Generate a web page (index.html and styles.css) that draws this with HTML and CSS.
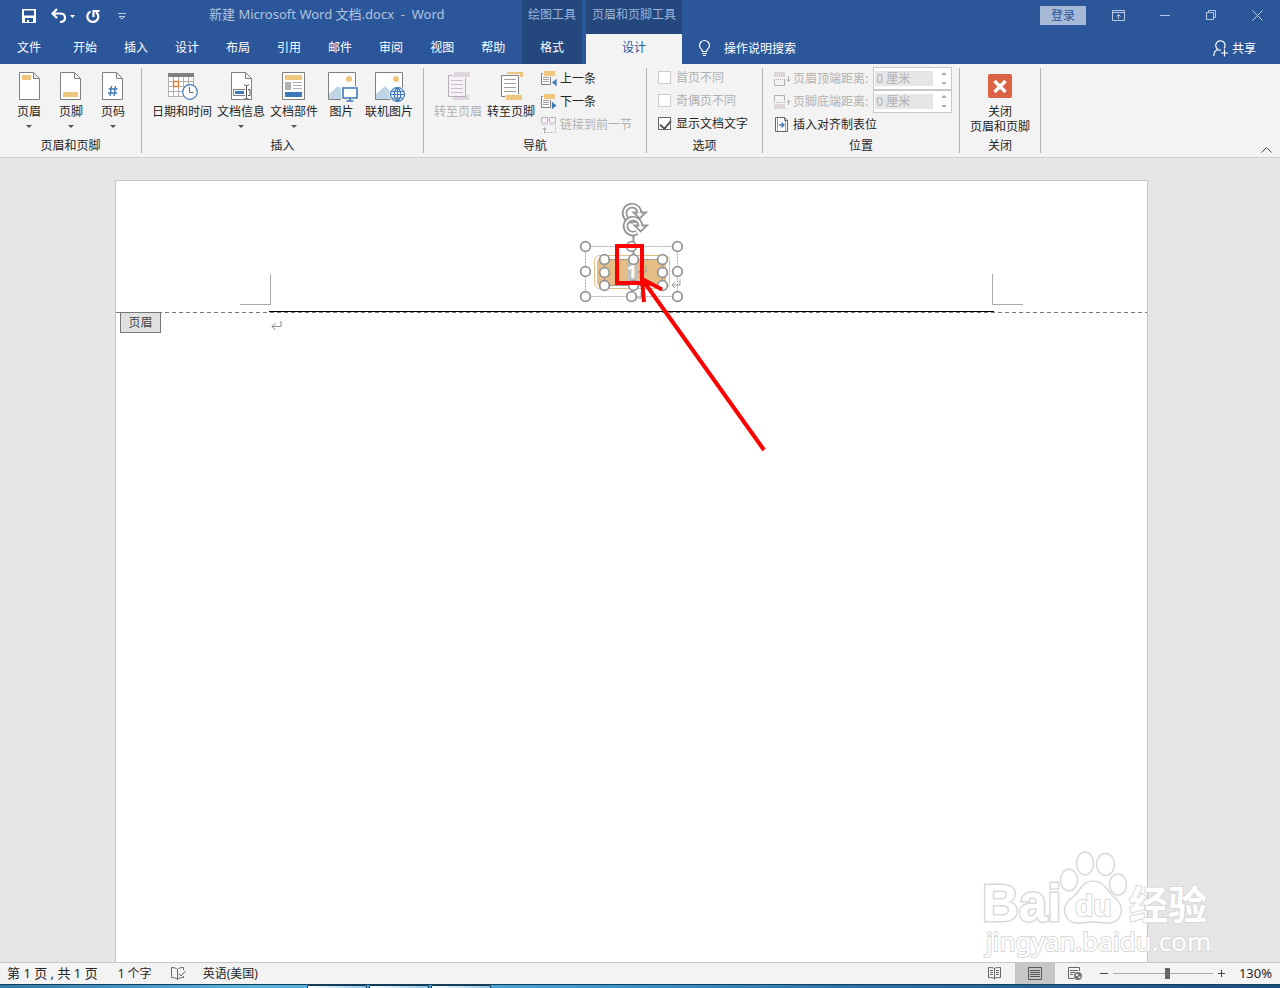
FILE: index.html
```html
<!DOCTYPE html>
<html lang="zh-CN">
<head>
    <meta charset="UTF-8">
    <meta name="viewport" content="width=device-width, initial-scale=1.0">
    <title>新建 Microsoft Word 文档.docx - Word</title>
    <link rel="stylesheet" href="styles.css">
</head>
<body>
    <header class="topbar">
        <div class="top-left">
            <div class="title-row">
                <div class="quick-access">
                    <button class="icon-btn" aria-label="保存">
                        <svg width="14" height="14" viewBox="0 0 14 14"><path fill="#fff" fill-rule="evenodd" d="M0 0h14v14H0zM2 1.500v5h10v-5zM3 9v4h2v-2h2v2h4V9z"/></svg>
                    </button>
                    <button class="icon-btn undo" aria-label="撤消">
                        <svg width="24" height="16" viewBox="0 0 24 16"><path fill="none" stroke="#fff" stroke-width="2.200" d="M6 1 1.500 5.500 6 10M2 5.500h7c3.500 0 5 1.800 5 4.200 0 2.800-2 4.300-5 4.300"/><path fill="#fff" d="M19 7h5l-2.500 3z"/></svg>
                    </button>
                    <button class="icon-btn" aria-label="重复">
                        <svg width="14" height="15" viewBox="0 0 14 15"><path fill="none" stroke="#fff" stroke-width="2.200" d="M4.500 2.500A5.500 5.500 0 1 0 10 3M7.500 8V2h6"/></svg>
                    </button>
                    <button class="icon-btn customize" aria-label="自定义快速访问工具栏">
                        <svg width="8" height="7" viewBox="0 0 8 7"><path fill="none" stroke="#b9c9e2" d="M0 .5h8M1 3.500h6L4 6z"/></svg>
                    </button>
                </div>
                <span class="doc-title">新建 Microsoft Word 文档.docx&nbsp; -&nbsp; Word</span>
            </div>
            <nav class="tabs">
                <button class="tab file">文件</button>
                <button class="tab">开始</button>
                <button class="tab">插入</button>
                <button class="tab">设计</button>
                <button class="tab">布局</button>
                <button class="tab">引用</button>
                <button class="tab">邮件</button>
                <button class="tab">审阅</button>
                <button class="tab">视图</button>
                <button class="tab">帮助</button>
            </nav>
        </div>
        <div class="context drawing">
            <span class="context-title">绘图工具</span>
            <button class="tab">格式</button>
        </div>
        <div class="context hf">
            <span class="context-title">页眉和页脚工具</span>
            <button class="tab active">设计</button>
        </div>
        <div class="top-right">
            <div class="window-row">
                <button class="login">登录</button>
                <button class="win-btn" aria-label="功能区显示选项">
                    <svg width="14" height="12" viewBox="0 0 14 12"><path fill="none" stroke="#b9c9e2" d="M.5.5h12v10H.5zM.5 2.500h12M6.500 9V4.500M4.500 6.500l2-2 2 2"/></svg>
                </button>
                <button class="win-btn" aria-label="最小化">
                    <svg width="11" height="11" viewBox="0 0 11 11"><path stroke="#b9c9e2" d="M0 5.500h10"/></svg>
                </button>
                <button class="win-btn" aria-label="还原">
                    <svg width="11" height="11" viewBox="0 0 11 11"><path fill="none" stroke="#b9c9e2" d="M.5 2.500h7v7h-7zM2.500 2.500v-2h7v7h-2"/></svg>
                </button>
                <button class="win-btn" aria-label="关闭">
                    <svg width="11" height="11" viewBox="0 0 11 11"><path fill="none" stroke="#b9c9e2" d="M.5.5l10 10M10.500.5l-10 10"/></svg>
                </button>
            </div>
            <div class="tell-row">
                <button class="tell">
                    <svg width="13" height="17" viewBox="0 0 13 17"><path fill="none" stroke="#fff" stroke-width="1.200" d="M4.500 11.500C4.500 9 1.500 8.500 1.500 5.500a5 5 0 0 1 10 0c0 3-3 3.500-3 6zM4 13.500h5M5 15.500h3"/></svg>
                    操作说明搜索
                </button>
                <button class="share">
                    <svg width="15" height="17" viewBox="0 0 15 17"><path fill="none" stroke="#fff" stroke-width="1.200" d="M.8 16c0-4 2-6 4.400-6.500M11 8.500A4.700 4.700 0 1 0 5 9.500c1 .5 2 .7 3 .5M11.500 9.500v7M8 13h7"/></svg>
                    共享
                </button>
            </div>
        </div>
    </header>

    <section class="ribbon">
        <div class="group g-hf">
            <div class="group-body">
                <button class="big">
                    <svg width="28" height="28" viewBox="0 0 28 28"><path fill="#fff" stroke="#808080" d="M4.500.5h14l6 6v21h-20zM18.500.5v6h6"/><path fill="#eec67e" d="M7 3h9v5H7z"/></svg>
                    <span>页眉</span><i class="arrow"></i>
                </button>
                <button class="big">
                    <svg width="28" height="28" viewBox="0 0 28 28"><path fill="#fff" stroke="#808080" d="M3.500.5h14l6 6v21h-20zM17.500.5v6h6"/><path fill="#eec67e" d="M6 20h15v5H6z"/></svg>
                    <span>页脚</span><i class="arrow"></i>
                </button>
                <button class="big">
                    <svg width="28" height="28" viewBox="0 0 28 28"><path fill="#fff" stroke="#808080" d="M3.500.5h14l6 6v21h-20zM17.500.5v6h6"/><path fill="none" stroke="#3f7ab8" stroke-width="1.400" d="M12.500 14l-1.500 10M16.500 14 15 24M9.500 17h9M9 21h9"/></svg>
                    <span>页码</span><i class="arrow"></i>
                </button>
            </div>
            <div class="group-name">页眉和页脚</div>
        </div>

        <div class="group g-insert">
            <div class="group-body">
                <button class="big">
                    <svg width="28" height="28" viewBox="0 0 28 28"><path fill="#fff" stroke="#b0b0b0" d="M.5 3.500h25v21H.5zM5.500 4v20M10.500 4v20M15.500 4v20M20.500 4v20M1 9.500h24M1 14.500h24M1 19.500h24"/><path fill="#808080" d="M0 1h26v4H0z"/><path fill="#fff" stroke="#e0813b" stroke-width="1.400" d="M5.500 9.500h5v5h-5z"/><circle cx="22" cy="20" r="7.300" fill="#fff" stroke="#3f7ab8" stroke-width="1.200"/><path fill="none" stroke="#666" d="M21.500 15v5.500h4"/></svg>
                    <span>日期和时间</span>
                </button>
                <button class="big">
                    <svg width="28" height="28" viewBox="0 0 28 28"><path fill="#fff" stroke="#808080" d="M4.500.5h14l6 6v21h-20zM18.500.5v6h6"/><path fill="#fff" stroke="#808080" d="M6.500 17.500h14v6h-14z"/><path fill="#3f7ab8" d="M8 19h9v3H8z"/><path fill="none" stroke="#fff" stroke-width="3" d="M19.500 13v14"/><path fill="none" stroke="#555" d="M17 12.500l2.500 1.500 2.500-1.500M19.500 14v12M17 27.500l2.500-1.500 2.500 1.500M21 17.500h2v6h-2"/></svg>
                    <span>文档信息</span><i class="arrow"></i>
                </button>
                <button class="big">
                    <svg width="28" height="28" viewBox="0 0 28 28"><path fill="#fff" stroke="#808080" d="M2.500.5h22v27h-22z"/><path fill="#eec67e" d="M5 3h17v5H5z"/><path fill="#b0b0b0" d="M5 10h6v8H5zM13 10h9v1h-9zM13 13h9v1h-9zM13 16h9v1h-9z"/><path fill="#3f7ab8" d="M5 20h17v5H5z"/></svg>
                    <span>文档部件</span><i class="arrow"></i>
                </button>
                <button class="big picture">
                    <svg width="28" height="28" viewBox="0 0 28 28"><path fill="#fff" stroke="#808080" d="M.5.5h27v27H.5z"/><path fill="#c0d4e8" d="M1 27v-5l9-8 8 8v5z"/><circle cx="21" cy="7" r="3" fill="#eec67e"/><path fill="#f3f3f3" d="M13 14h17v16H13z"/><path fill="#fff" stroke="#3f7ab8" stroke-width="1.600" d="M15 16h14v10H15z"/><path stroke="#3f7ab8" stroke-width="1.500" d="M22 26v3M18.500 29h7"/></svg>
                    <span>图片</span>
                </button>
                <button class="big">
                    <svg width="28" height="28" viewBox="0 0 28 28"><path fill="#fff" stroke="#808080" d="M.5.5h27v27H.5z"/><path fill="#c0d4e8" d="M1 27v-5l9-8 8 8v5z"/><circle cx="21" cy="7" r="3" fill="#eec67e"/><circle cx="22.500" cy="22.500" r="8.500" fill="#f3f3f3"/><circle cx="22.500" cy="22.500" r="6.800" fill="#fff"/><path fill="none" stroke="#3f7ab8" stroke-width="1.200" d="M22.500 15.500a7 7 0 1 0 0 14 7 7 0 0 0 0-14zM22.500 15.500c-4.500 4-4.500 10 0 14M22.500 15.500c4.500 4 4.500 10 0 14M22.500 15.500v14M16.500 19.500h12M15.500 22.500h14M16.500 26h12"/></svg>
                    <span>联机图片</span>
                </button>
            </div>
            <div class="group-name">插入</div>
        </div>

        <div class="group g-nav">
            <div class="group-body">
                <button class="big" disabled>
                    <svg width="28" height="28" viewBox="-3 0 28 28"><path fill="#ddd6dc" d="M6 28v-4h14v-1h2v5z"/><path fill="#f7f0f8" stroke="#b8aebb" d="M1.500 3.500h17v21h-17z"/><path stroke="#c9c0cb" d="M4 8.500h12M4 12.500h12M4 16.500h12M4 20.500h12"/><path fill="#ddd6dc" stroke="#f3f3f3" d="M6.500-.5h17v6h-17z"/></svg>
                    <span>转至页眉</span>
                </button>
                <button class="big">
                    <svg width="28" height="28" viewBox="-3 0 28 28"><path fill="#eec67e" d="M7 0h16v5h-3V2H7z"/><path fill="#fff" stroke="#808080" d="M1.500 3.500h17v21h-17z"/><path stroke="#a0a0a0" d="M4 7.500h12M4 11.500h12M4 15.500h12M4 19.500h12"/><path fill="#eec67e" stroke="#f3f3f3" d="M5.500 22.500h17v6h-17z"/></svg>
                    <span>转至页脚</span>
                </button>
                <div class="stack">
                    <button class="small">
                        <svg width="16" height="16" viewBox="0 0 16 16"><path fill="#fff" stroke="#808080" d="M.5 2.500h9v11h-9z"/><path stroke="#a0a0a0" d="M2 6.500h6M2 8.500h6M2 10.500h6"/><path fill="#eec67e" stroke="#f3f3f3" d="M2.500-.5h12v6h-12z"/><path fill="#3f7ab8" stroke="#f3f3f3" stroke-width=".8" d="M16 7v9l-5.500-4.500z"/></svg>
                        上一条
                    </button>
                    <button class="small">
                        <svg width="16" height="16" viewBox="0 0 16 16"><path fill="#fff" stroke="#808080" d="M.5 2.500h9v11h-9z"/><path stroke="#a0a0a0" d="M2 6.500h6M2 8.500h6M2 10.500h6"/><path fill="#eec67e" stroke="#f3f3f3" d="M2.500-.5h12v6h-12z"/><path fill="#3f7ab8" stroke="#f3f3f3" stroke-width=".8" d="M10.500 7v9l5.500-4.500z"/></svg>
                        下一条
                    </button>
                    <button class="small" disabled>
                        <svg width="16" height="16" viewBox="0 0 16 16"><path fill="#f7f0f8" stroke="#b8aebb" d="M.5.5h6v7h-6zM8.500.5h6v7h-6z"/><path fill="#ddd6dc" d="M0 5h7v3H0zM8 5h7v3H8z"/><path fill="none" stroke="#aaa" d="M3.500 16v-5M1.500 12.500l2-2 2 2"/><path fill="none" stroke="#aaa" stroke-dasharray="1 1" d="M4 15.500h10.500V9"/></svg>
                        链接到前一节
                    </button>
                </div>
            </div>
            <div class="group-name">导航</div>
        </div>

        <div class="group g-options">
            <div class="group-body">
                <div class="stack">
                    <label class="check off"><input type="checkbox" disabled>首页不同</label>
                    <label class="check off"><input type="checkbox" disabled>奇偶页不同</label>
                    <label class="check"><input type="checkbox" checked>显示文档文字</label>
                </div>
            </div>
            <div class="group-name">选项</div>
        </div>

        <div class="group g-position">
            <div class="group-body">
                <div class="stack">
                    <div class="distance">
                        <svg width="16" height="16" viewBox="0 0 16 16"><path fill="#ddd6dc" d="M0 1h11v5H0z"/><path fill="none" stroke="#b0b0b0" d="M.5 9v5.500h10V9M14.500 5v5M13 8.500l1.500 2 1.500-2"/><path stroke="#b0b0b0" stroke-dasharray="1 1" d="M0 8.500h11"/></svg>
                        <label for="headerTop">页眉顶端距离:</label>
                        <span class="spinner"><input id="headerTop" type="text" value="0 厘米" disabled><span class="spin"><i class="arrow up"></i><i class="arrow"></i></span></span>
                    </div>
                    <div class="distance">
                        <svg width="16" height="16" viewBox="0 0 16 16"><path fill="#ddd6dc" d="M0 10h11v5H0z"/><path fill="none" stroke="#b0b0b0" d="M.5 7V1.500h10V7M14.500 11V6M13 8l1.500-2L16 8"/><path stroke="#b0b0b0" stroke-dasharray="1 1" d="M0 8.500h11"/></svg>
                        <label for="footerBottom">页脚底端距离:</label>
                        <span class="spinner"><input id="footerBottom" type="text" value="0 厘米" disabled><span class="spin"><i class="arrow up"></i><i class="arrow"></i></span></span>
                    </div>
                    <button class="small align">
                        <svg width="14" height="16" viewBox="0 0 14 16"><path fill="#fff" stroke="#666" d="M.5.5h9l3 3v11H.5zM9.500.5v3h3"/><path stroke="#999" d="M2.500 1v13M10.500 4v10"/><path fill="none" stroke="#3f7ab8" stroke-width="1.300" d="M4 8h5M6.500 5.500 9 8l-2.500 2.500"/></svg>
                        插入对齐制表位
                    </button>
                </div>
            </div>
            <div class="group-name">位置</div>
        </div>

        <div class="group g-close">
            <div class="group-body">
                <button class="big">
                    <svg width="24" height="28" viewBox="0 0 24 28"><rect y="2" width="24" height="24" rx="2" fill="#db6344"/><path fill="none" stroke="#fff" stroke-width="3.400" d="M6.500 9l11 11M17.500 9l-11 11"/></svg>
                    <span>关闭<br>页眉和页脚</span>
                </button>
            </div>
            <div class="group-name">关闭</div>
        </div>

        <button class="collapse" aria-label="折叠功能区">
            <svg width="11" height="6" viewBox="0 0 11 6"><path fill="none" stroke="#444" d="M.5 5.500l5-5 5 5"/></svg>
        </button>
    </section>

    <main class="workspace">
        <div class="page">
            <div class="page-header">
                <div class="corners">
                    <span class="corner left"></span>
                    <span class="corner right"></span>
                </div>
                <hr class="header-line">
            </div>
            <div class="below-header">
                <span class="header-tag">页眉</span>
                <svg class="mark" width="11" height="10" viewBox="0 0 11 10"><path fill="none" stroke="#888" d="M10 0v5.500H1M4.500 2 1 5.500 4.500 9"/></svg>
            </div>

            <!-- selected page number shape and the pointer drawn over it -->
            <svg class="shape" width="210" height="265" viewBox="0 0 210 265">
                <defs>
                    <g id="rotate">
                        <path fill="none" stroke="#969696" stroke-width="5.500" d="M7.500 0A7.500 7.500 0 1 0 4 6.500"/>
                        <path fill="#fff" stroke="#969696" stroke-width="1.800" d="M1.500-.5H14L7.700 5.500z"/>
                        <path fill="none" stroke="#fff" stroke-width="2" d="M7.500 1.500V0A7.500 7.500 0 1 0 3.500 6.700"/>
                    </g>
                    <circle id="handle" r="4.800" fill="#fff" stroke="#969696" stroke-width="1.800"/>
                    <path id="enter" fill="none" stroke="#999" d="M8 0v6H0M3 3 0 6l3 3"/>
                </defs>
                <rect x="34.500" y="65.500" width="75" height="33" rx="5" fill="#fff" stroke="#e5bd86"/>
                <rect x="37" y="69" width="69" height="27" rx="3" fill="#e5bd86"/>
                <rect x="25.500" y="56.500" width="92" height="50" fill="none" stroke="#aaa" stroke-dasharray="2 1"/>
                <rect x="44.500" y="69.500" width="58" height="26" fill="none" stroke="#888" stroke-dasharray="2 1"/>
                <rect x="67" y="70" width="11" height="22" fill="#c0c0c0"/>
                <text x="72" y="88" class="page-number">1</text>
                <use href="#enter" x="78" y="76"/>
                <use href="#enter" x="112" y="89"/>
                <use href="#enter" x="73" y="102"/>
                <path stroke="#969696" stroke-width="2" d="M73.500 44v22"/>
                <use href="#rotate" x="72" y="23"/>
                <use href="#rotate" x="73" y="36"/>
                <use href="#handle" x="25.500" y="56.500"/>
                <use href="#handle" x="71.500" y="56.500"/>
                <use href="#handle" x="117.500" y="56.500"/>
                <use href="#handle" x="25.500" y="81.500"/>
                <use href="#handle" x="117.500" y="81.500"/>
                <use href="#handle" x="25.500" y="106.500"/>
                <use href="#handle" x="71.500" y="106.500"/>
                <use href="#handle" x="117.500" y="106.500"/>
                <use href="#handle" x="44.500" y="69.500"/>
                <use href="#handle" x="73.500" y="69.500"/>
                <use href="#handle" x="102.500" y="69.500"/>
                <use href="#handle" x="44.500" y="82.500"/>
                <use href="#handle" x="102.500" y="82.500"/>
                <use href="#handle" x="44.500" y="95.500"/>
                <use href="#handle" x="73.500" y="95.500"/>
                <use href="#handle" x="102.500" y="95.500"/>
                <path fill="none" stroke="#f00" stroke-width="4" d="M57 56h25v37H57z"/>
                <path fill="none" stroke="#f00" stroke-width="4" d="M82 89 204 260M84 112 82 89l20 10.500"/>
            </svg>
        </div>

        <svg class="watermark" width="240" height="115" viewBox="0 0 240 115">
            <g fill="#fff" stroke="#d9d9d9" stroke-width="1.500">
                <ellipse cx="99" cy="33" rx="8.500" ry="11"/>
                <ellipse cx="115" cy="16.500" rx="8.500" ry="11.500"/>
                <ellipse cx="135.500" cy="17.500" rx="9" ry="11"/>
                <ellipse cx="148" cy="37.500" rx="8.500" ry="10.500"/>
                <path d="M123 34c-11 0-12 9-19 15-7 5-12 12-8 20 5 11 17 6 27 6s22 5 27-6c4-8-1-15-7-20-7-6-9-15-20-15z"/>
            </g>
            <text class="wm-bai" x="12" y="74">Bai</text>
            <text class="wm-du" x="105" y="69">du</text>
            <text class="wm-jy" x="159" y="72">经验</text>
            <text class="wm-url" x="16" y="104">jingyan.baidu.com</text>
        </svg>
    </main>

    <footer class="status">
        <span class="pages">第 1 页 , 共 1 页</span>
        <span class="words">1 个字</span>
        <button class="icon-btn proof" aria-label="校对">
            <svg width="15" height="14" viewBox="0 0 15 14"><path fill="none" stroke="#666" d="M6.500 12.500V2.500c-1-1.500-4-2-6-2v10c2 0 5 .5 6 2 1-1.500 3-2 6-2V9M6.500 2.500c1-1.500 3-2 6-2V3M8 6.500l2 2.500 4.500-5"/></svg>
        </button>
        <span class="lang">英语(美国)</span>
        <div class="views">
            <button class="view" aria-label="阅读视图">
                <svg width="14" height="13" viewBox="0 0 14 13"><path fill="none" stroke="#666" d="M6.500 1.500v11M6.500 1.500C5 .5 3 .5.5.5v10c2.500 0 4.500 0 6 1 1.500-1 3.500-1 6-1V.5c-2.500 0-4.500 0-6 1M2 3.500h3M2 5.500h3M2 7.500h3M8 3.500h3M8 5.500h3M8 7.500h3"/></svg>
            </button>
            <button class="view on" aria-label="页面视图">
                <svg width="14" height="13" viewBox="0 0 14 13"><path fill="none" stroke="#555" d="M.5.5h13v12H.5zM2 3.500h10M2 5.500h10M2 7.500h10M2 9.500h10"/></svg>
            </button>
            <button class="view" aria-label="Web 版式视图">
                <svg width="14" height="13" viewBox="0 0 14 13"><path fill="none" stroke="#666" d="M6 11.500H.5V.5h11V4M2 3.500h8M2 5.500h5M2 7.500h3"/><circle cx="10" cy="9" r="4" fill="#777"/><path fill="#f3f3f3" d="M8 7h2v2H8zM10.500 9.500h2v1.500h-2z"/></svg>
            </button>
            <button class="zoom-btn" aria-label="缩小"><svg width="8" height="7" viewBox="0 0 8 7"><path stroke="#444" d="M0 3.500h8"/></svg></button>
            <input class="zoom" type="range" min="0" max="100" value="55" aria-label="缩放">
            <button class="zoom-btn" aria-label="放大"><svg width="8" height="7" viewBox="0 0 8 7"><path stroke="#444" d="M0 3.500h7M3.500 0v7"/></svg></button>
            <span class="percent">130%</span>
        </div>
    </footer>
    <div class="taskbar">
        <span class="task"></span>
        <span class="task"></span>
        <span class="task"></span>
    </div>
</body>
</html>
```
FILE: styles.css
```css
* {
    box-sizing: border-box;
}

body {
    margin: 0;
    min-height: 100vh;
    display: flex;
    flex-direction: column;
    background-color: #e6e6e6;
    color: #262626;
    font-family: "Noto Sans", "Noto Sans CJK SC", sans-serif;
    font-size: 12px;
    line-height: 15px;
    white-space: nowrap;
}

button {
    border: none;
    padding: 0;
    background: none;
    color: inherit;
    font: inherit;
}

svg {
    display: block;
    flex: none;
    overflow: visible;
}

/* Title bar and tabs */
.topbar {
    display: flex;
    height: 64px;
    background-color: #2b579a;
    color: #ffffff;
}

.top-left {
    width: 522px;
}

.title-row {
    display: flex;
    align-items: center;
    height: 34px;
    padding: 0 0 2px 22px;
}

.quick-access {
    display: flex;
    align-items: center;
    width: 187px;
}

.undo {
    margin: 0 11px 0 15px;
}

.customize {
    margin-left: 18px;
}

.doc-title {
    color: #b1c3de;
    font-size: 13px;
    padding-bottom: 4px;
}

.tabs {
    display: flex;
    gap: 27px;
    height: 30px;
    padding-left: 17px;
}

.tab {
    height: 30px;
    padding-bottom: 3px;
    text-align: center;
}

.file {
    margin-right: 5px;
}

.context {
    display: flex;
    flex-direction: column;
    background-color: #24477e;
    text-align: center;
}

.drawing {
    width: 60px;
    margin-right: 4px;
}

.hf {
    width: 96px;
}

.context-title {
    height: 34px;
    line-height: 30px;
    color: #9cb4d8;
}

.tab.active {
    background-color: #f3f3f3;
    color: #2b579a;
}

.top-right {
    flex: 1;
}

.window-row {
    display: flex;
    justify-content: flex-end;
    align-items: center;
    height: 34px;
    padding-bottom: 3px;
}

.login {
    width: 46px;
    height: 19px;
    margin-right: 10px;
    background-color: #a6b9d6;
    color: #2b579a;
}

.win-btn {
    width: 46px;
    height: 30px;
    display: flex;
    align-items: center;
    justify-content: center;
}

.tell-row {
    display: flex;
    justify-content: space-between;
    padding: 0 24px 0 16px;
    height: 28px;
}

.tell,
.share {
    display: flex;
    align-items: center;
    gap: 13px;
}

.share {
    gap: 4px;
}

/* Ribbon */
.ribbon {
    display: flex;
    height: 94px;
    padding: 4px 0;
    background-color: #f3f3f3;
    border-bottom: 1px solid #cfcfcf;
}

.group {
    display: flex;
    flex-direction: column;
    border-right: 1px solid #b5b5b5;
}

.group-body {
    display: flex;
    height: 72px;
}

.group-name {
    text-align: center;
}

.g-hf {
    width: 142px;
}

.g-hf .group-body {
    padding-left: 8px;
}

.g-hf .big {
    width: 42px;
}

.g-insert {
    width: 282px;
}

.g-insert .group-body {
    gap: 5px;
    padding-left: 10px;
}

.g-nav {
    width: 223px;
}

.g-nav .group-body {
    gap: 5px;
    padding-left: 10px;
}

.g-nav .stack {
    padding-left: 1px;
}

.g-options {
    width: 116px;
    padding-left: 11px;
}

.g-options .group-name {
    padding-right: 11px;
}

.g-position {
    width: 197px;
    padding-left: 11px;
}

.g-position .group-name {
    padding-right: 11px;
}

.g-close {
    width: 81px;
}

.g-close .group-body {
    justify-content: center;
}

.big {
    display: flex;
    flex-direction: column;
    align-items: center;
    padding-top: 4px;
}

.big svg {
    margin-bottom: 4px;
}

.big span {
    display: block;
}

.picture {
    width: 37px;
}

.big .arrow {
    margin-top: 6px;
}

.arrow {
    width: 0;
    height: 0;
    border: 3px solid transparent;
    border-top-color: #555555;
    border-bottom: none;
}

.arrow.up {
    border-top: none;
    border-bottom: 3px solid #b0b0b0;
}

button:disabled,
.off {
    color: #b1b1b1;
}

.small,
.check,
.distance {
    display: flex;
    align-items: center;
    height: 23px;
    gap: 3px;
}

.stack .small {
    padding-bottom: 2px;
}

.check {
    gap: 5px;
    padding-bottom: 4px;
}

.check input {
    appearance: none;
    width: 13px;
    height: 13px;
    margin: 0;
    background-color: #ffffff;
    border: 1px solid #666666;
}

.check input:disabled {
    border-color: #cccccc;
}

.check input:checked::before {
    content: "";
    display: block;
    width: 5px;
    height: 9px;
    margin: 0 0 0 3px;
    border: solid #555555;
    border-width: 0 2px 2px 0;
    transform: rotate(40deg);
}

.g-position .stack {
    margin-top: -1px;
}

.distance {
    color: #b1b1b1;
}

.stack .align {
    gap: 4px;
    margin-top: 1px;
    padding-left: 1px;
}

.spinner {
    display: flex;
    align-items: center;
    width: 79px;
    height: 23px;
    margin-left: 2px;
    padding-left: 1px;
    background-color: #ffffff;
    border: 1px solid #c8c8c8;
}

.spinner input {
    width: 58px;
    height: 15px;
    padding: 0 0 0 1px;
    border: none;
    background-color: #e6e6e6;
    color: #b1b1b1;
    font: inherit;
}

.spin {
    display: flex;
    flex-direction: column;
    gap: 7px;
    margin-left: 8px;
}

.spin .arrow {
    border-top-color: #b0b0b0;
}

.spin .arrow.up {
    border-top: none;
}

.collapse {
    margin: auto 8px 0 auto;
}

/* Document */
.workspace {
    position: relative;
    flex: 1;
    display: flex;
    justify-content: center;
    padding: 22px 17px 0 0;
}

.page {
    position: relative;
    width: 1033px;
    background-color: #ffffff;
    border: 1px solid #c6c6c6;
    border-bottom: none;
}

.page-header {
    display: flex;
    flex-direction: column;
    height: 132px;
    background: repeating-linear-gradient(90deg, #777777 0 4px, transparent 4px 7px) bottom / 100% 1px no-repeat;
}

.corners {
    flex: 1;
    display: flex;
    justify-content: space-between;
    align-items: flex-end;
    padding: 0 124px 6px;
}

.corner {
    width: 31px;
    height: 31px;
    border-bottom: 1px solid #aaaaaa;
}

.corner.left {
    border-right: 1px solid #aaaaaa;
}

.corner.right {
    border-left: 1px solid #aaaaaa;
}

.header-line {
    width: 725px;
    height: 1px;
    margin: 0 auto 1px;
    border: none;
    background-color: #000000;
}

.below-header {
    display: flex;
    align-items: center;
    padding-left: 4px;
    margin-top: -1px;
}

.header-tag {
    width: 41px;
    height: 21px;
    line-height: 19px;
    text-align: center;
    background-color: #e1e1e1;
    border: 1px solid #777777;
    color: #444444;
}

.mark {
    margin: 6px 0 0 110px;
}

.shape {
    position: absolute;
    left: 444px;
    top: 9px;
}

.page-number {
    font-size: 18px;
    font-weight: bold;
    fill: #ffffff;
    text-anchor: middle;
}

.watermark {
    position: absolute;
    right: 70px;
    bottom: 0;
}

.watermark text {
    fill: #ffffff;
    stroke: #d9d9d9;
    stroke-width: 2px;
    paint-order: stroke;
}

.watermark .wm-bai {
    font: bold 51px "Liberation Sans", sans-serif;
    stroke-width: 3px;
}

.wm-du {
    font: bold 30px "Liberation Sans", sans-serif;
}

.wm-jy {
    font: bold 39px "Noto Sans CJK SC", sans-serif;
}

.wm-url {
    font: 26px "Noto Sans", sans-serif;
}

/* Status bar */
.status {
    display: flex;
    align-items: center;
    height: 22px;
    padding-left: 7px;
    background-color: #f3f3f3;
    border-top: 1px solid #c6c6c6;
}

.pages,
.percent {
    font-size: 13px;
}

.words {
    margin-left: 20px;
}

.proof {
    margin: 0 17px 0 19px;
}

.views {
    display: flex;
    align-items: center;
    margin-left: auto;
    padding-right: 8px;
}

.view {
    display: flex;
    align-items: center;
    justify-content: center;
    width: 40px;
    height: 21px;
}

.view.on {
    background-color: #c6c6c6;
}

.zoom-btn {
    margin-left: 5px;
}

.zoom {
    appearance: none;
    width: 100px;
    height: 11px;
    margin: 0 0 0 5px;
    background: linear-gradient(#aaaaaa, #aaaaaa) center / 100% 1px no-repeat;
}

.zoom::-webkit-slider-thumb {
    appearance: none;
    width: 5px;
    height: 11px;
    background-color: #666666;
}

.percent {
    margin-left: 13px;
}

.taskbar {
    display: flex;
    gap: 2px;
    height: 4px;
    padding-left: 307px;
    background: linear-gradient(90deg, #2d7ba8, #5cb3e2 20%, #3f9bd0 45%, #2a6ba6 70%, #1c4d80);
    border-top: 1px solid #123f5c;
}

.task {
    width: 60px;
    background: linear-gradient(90deg, #ffffff, #8fc6e6);
    border: 1px solid #16394f;
    border-bottom: none;
    border-radius: 2px 2px 0 0;
}
```
